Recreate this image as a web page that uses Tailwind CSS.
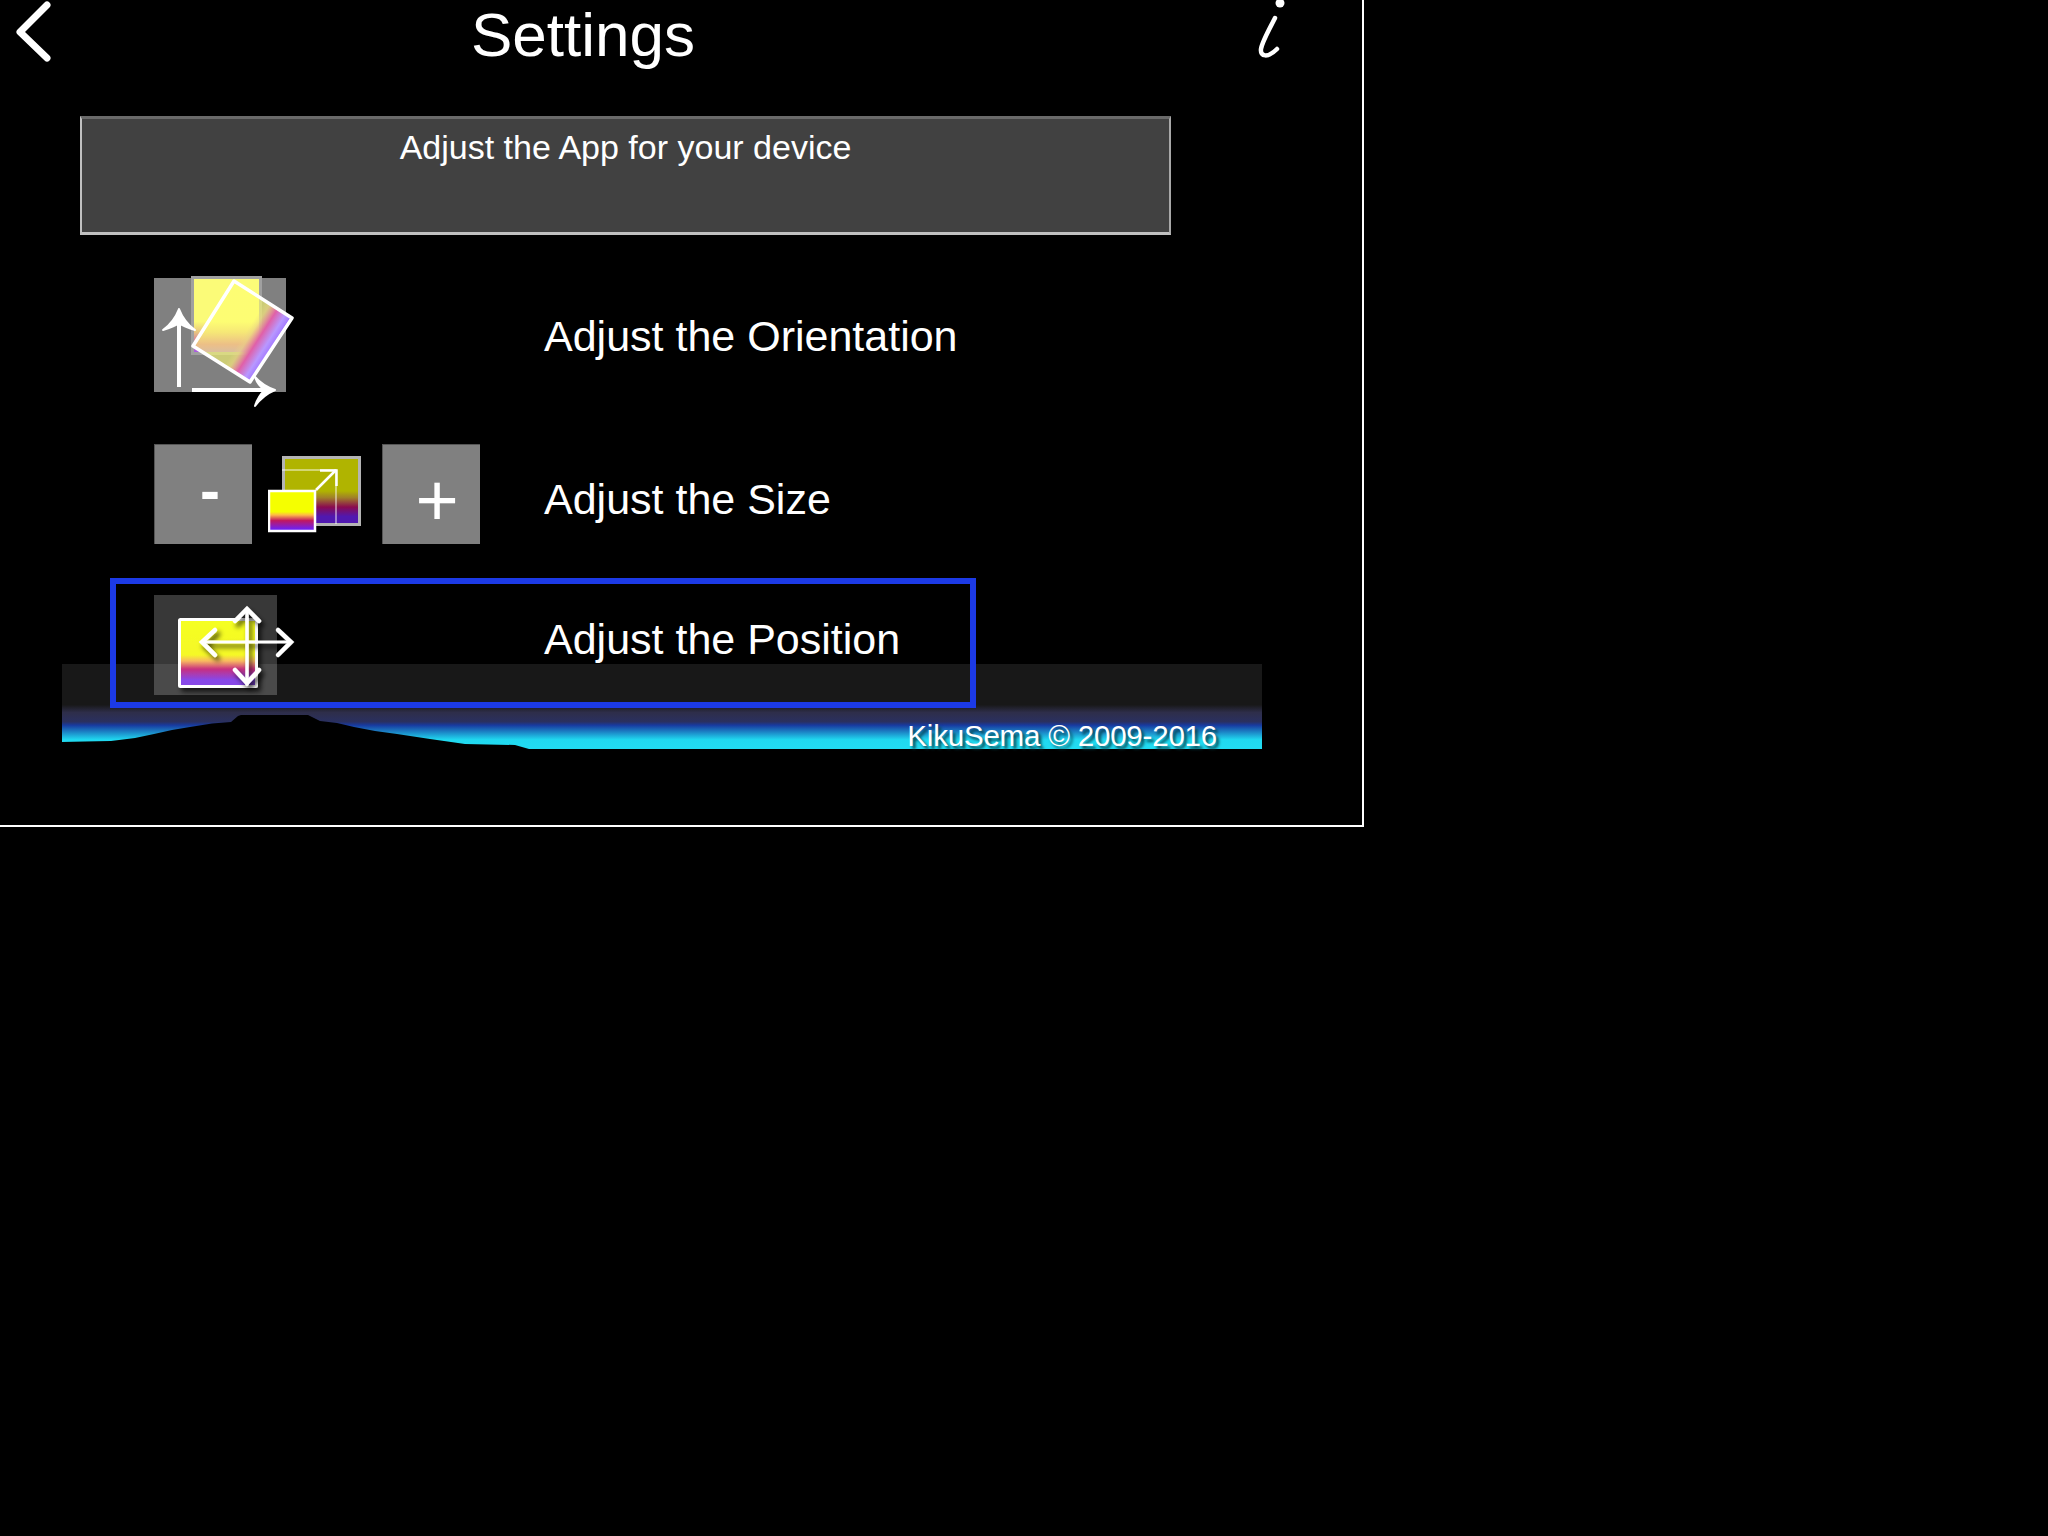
<!doctype html>
<html>
<head>
<meta charset="utf-8">
<script src="https://cdn.jsdelivr.net/npm/@tailwindcss/browser@4"></script>
<title>Settings</title>
</head>
<body class="bg-black m-0 w-[2048px] h-[1536px] overflow-hidden font-['Liberation_Sans',Arial,sans-serif] text-white">
<main class="relative w-[1364px] h-[827px] border-r-2 border-b-2 border-white bg-black">

  <!-- footer band, behind the rows -->
  <div class="absolute left-[62px] top-[664px] w-[1200px] h-[85px] flex justify-end items-end pr-[45px] bg-[linear-gradient(to_bottom,#181818_0%,#181818_48%,#2e2e4a_57%,#2a3060_68%,#183aa0_72%,#20d8f0_89%,#22dcf2_100%)]">
    <svg class="absolute left-0 top-0" width="1200" height="85" viewBox="62 664 1200 85">
      <polygon fill="#000" points="62,742 85,741.500 111,741 135,738 154,734 172,730 190,727 212,723.500 231,722 238,716 241,715 308,715 320,721 337,723 354,727 375,731 397,734 430,739 465,744 515,745 529,749 62,749"/>
    </svg>
    <span class="relative -mb-[4px] text-[29.5px] leading-[34px] tracking-[-0.2px] [text-shadow:3px_3px_3px_#04444f]">KikuSema © 2009-2016</span>
  </div>

  <header class="relative h-[116px] flex">
    <svg class="ml-[14px] mt-0 shrink-0" width="40" height="64" viewBox="14 0 40 64" fill="none" stroke="#fff" stroke-width="7" stroke-linecap="round" stroke-linejoin="round"><path d="M47 5 L20 32 L47 58"/></svg>
    <h1 class="ml-[417px] text-[62px] leading-[70px] font-normal">Settings</h1>
    <svg class="absolute left-[1250px] top-0" width="40" height="64" viewBox="1250 0 40 64" fill="none" stroke="#fff" stroke-linecap="round"><circle cx="1280" cy="3" r="4.5" fill="#fff" stroke="none"/><path stroke-width="4.5" d="M1275 18 C1270 28 1262 42 1261 49 C1260 57 1268 58 1277 49"/></svg>
  </header>

  <section class="relative ml-[80px] w-[1091px] h-[119px] bg-[#414141] border-t-[3px] border-l-2 border-r-2 border-b-[3px] border-t-[#6a6a6a] border-l-[#c0c0c0] border-r-[#a8a8a8] border-b-[#c0c0c0] text-center pt-[9px] text-[34px] leading-[38px]">Adjust the App for your device</section>

  <div class="relative ml-[154px] mt-[35px] h-[135px] flex items-center">
    <svg class="w-[390px] shrink-0 overflow-visible" height="135" viewBox="154 270 390 135" fill="none">
      <defs>
        <linearGradient id="o1" x1="0" y1="0" x2="0" y2="1"><stop offset="0" stop-color="#fbfb78"/><stop offset=".58" stop-color="#fbfb78"/><stop offset=".72" stop-color="#e8c480"/><stop offset=".88" stop-color="#d060a8"/><stop offset="1" stop-color="#a060f0"/></linearGradient>
        <linearGradient id="o2" gradientUnits="userSpaceOnUse" x1="213" y1="313" x2="271" y2="350"><stop offset="0" stop-color="#ffff70" stop-opacity=".6"/><stop offset=".55" stop-color="#ffff70" stop-opacity=".6"/><stop offset=".63" stop-color="#f0e080" stop-opacity=".8"/><stop offset=".76" stop-color="#e060a8"/><stop offset=".9" stop-color="#b898ff"/><stop offset=".97" stop-color="#a880ff"/><stop offset="1" stop-color="#5000ff"/></linearGradient>
      </defs>
      <rect x="154" y="278" width="132" height="114" fill="#808080"/>
      <rect x="192.500" y="277.500" width="68" height="76" fill="url(#o1)" stroke="#a0a0a0" stroke-width="3"/>
      <polygon points="234,281 292,318 250,382 193,346" fill="url(#o2)" stroke="#fff" stroke-width="3.500" stroke-linejoin="round"/>
      <path d="M179 387 V315" stroke="#fff" stroke-width="4"/>
      <path d="M179 309 Q174 322 163 330 Q174 327 179 323 Q184 327 195 330 Q184 322 179 309Z" fill="#fff" stroke="#fff" stroke-width="2" stroke-linejoin="round"/>
      <path d="M192 390 H268" stroke="#fff" stroke-width="4"/>
      <path d="M275 390 Q263 386 255 377 Q258 386 265 390 Q258 396 255 406 Q263 395 275 390Z" fill="#fff" stroke="#fff" stroke-width="2" stroke-linejoin="round"/>
    </svg>
    <span class="text-[43px] leading-[50px] -mt-[4px]">Adjust the Orientation</span>
  </div>

  <div class="relative ml-[154px] mt-[39px] h-[100px] flex items-center">
    <div class="w-[98px] h-[100px] bg-[#808080] border-l border-t border-[#555555] flex items-center justify-center text-[60px] font-bold leading-none shrink-0 pb-[8px] pl-[13px]">-</div>
    <svg class="ml-[16px] shrink-0" width="96" height="80" viewBox="268 455 96 80" fill="none">
      <defs>
        <linearGradient id="s1" x1="0" y1="0" x2="0" y2="1"><stop offset="0" stop-color="#b0b400"/><stop offset=".5" stop-color="#b0b400"/><stop offset=".6" stop-color="#a08028"/><stop offset=".74" stop-color="#8a0a50"/><stop offset=".88" stop-color="#5018b0"/><stop offset="1" stop-color="#5018b0"/></linearGradient>
        <linearGradient id="s2" x1="0" y1="0" x2="0" y2="1"><stop offset="0" stop-color="#f5ff00"/><stop offset=".52" stop-color="#f5ff00"/><stop offset=".6" stop-color="#ffb848"/><stop offset=".74" stop-color="#c01860"/><stop offset=".95" stop-color="#7020f0"/><stop offset="1" stop-color="#7020f0"/></linearGradient>
      </defs>
      <rect x="283.500" y="458.500" width="76" height="67" fill="url(#s1)" stroke="#b4b4b4" stroke-width="3"/>
      <path d="M282 471 H336 V525" stroke="#fff" stroke-opacity=".6" stroke-width="1.500"/>
      <path d="M316 491 L336 471" stroke="#fff" stroke-width="2.500"/>
      <path d="M320 471.500 H336.500 V487" stroke="#fff" stroke-width="2.500"/>
      <rect x="269" y="492" width="46" height="40" fill="url(#s2)" stroke="#fff" stroke-width="2.500"/>
    </svg>
    <div class="ml-[18px] w-[98px] h-[100px] bg-[#808080] border-l border-t border-[#555555] flex items-center justify-center text-[74px] leading-none shrink-0 pt-[12px] pl-[11px]">+</div>
    <span class="ml-[64px] text-[43px] leading-[50px] mt-[10px]">Adjust the Size</span>
  </div>

  <div class="relative ml-[110px] mt-[34px] w-[866px] h-[130px] border-[6px] border-[#1c3ae6] pl-[38px] pt-[11px] flex items-start">
    <svg class="shrink-0 overflow-visible w-[390px]" height="100" viewBox="154 595 390 100" fill="none">
      <defs>
        <linearGradient id="p1" x1="0" y1="0" x2="0" y2="1"><stop offset="0" stop-color="#f5ff20"/><stop offset=".53" stop-color="#f5f828"/><stop offset=".62" stop-color="#f8b860"/><stop offset=".74" stop-color="#c83080"/><stop offset=".9" stop-color="#8848e8"/><stop offset="1" stop-color="#8848e8"/></linearGradient>
        <filter id="ps" x="-20%" y="-20%" width="150%" height="150%"><feDropShadow dx="3" dy="4" stdDeviation="2.500" flood-color="#000" flood-opacity=".7"/></filter>
      </defs>
      <rect x="154" y="595" width="123" height="100" fill="#fff" fill-opacity=".22"/>
      <rect x="179.500" y="619.500" width="77" height="67" fill="url(#p1)" stroke="#fff" stroke-width="3" rx="1" filter="url(#ps)"/>
      <g filter="url(#ps)" stroke="#fff" stroke-linejoin="miter" stroke-linecap="round">
        <path d="M202 642 H291" stroke-width="3"/>
        <path d="M247 609 V684" stroke-width="3.500"/>
        <path d="M215 630 L202 642 L215 655" stroke-width="4.500"/>
        <path d="M278 630 L291 642 L278 655" stroke-width="4.500"/>
        <path d="M235 621 L247 609 L259 621" stroke-width="4.500"/>
        <path d="M235 670 L247 683 L259 670" stroke-width="4.500"/>
      </g>
    </svg>
    <span class="text-[43px] leading-[50px] mt-[19px]">Adjust the Position</span>
  </div>
</main>
</body>
</html>
